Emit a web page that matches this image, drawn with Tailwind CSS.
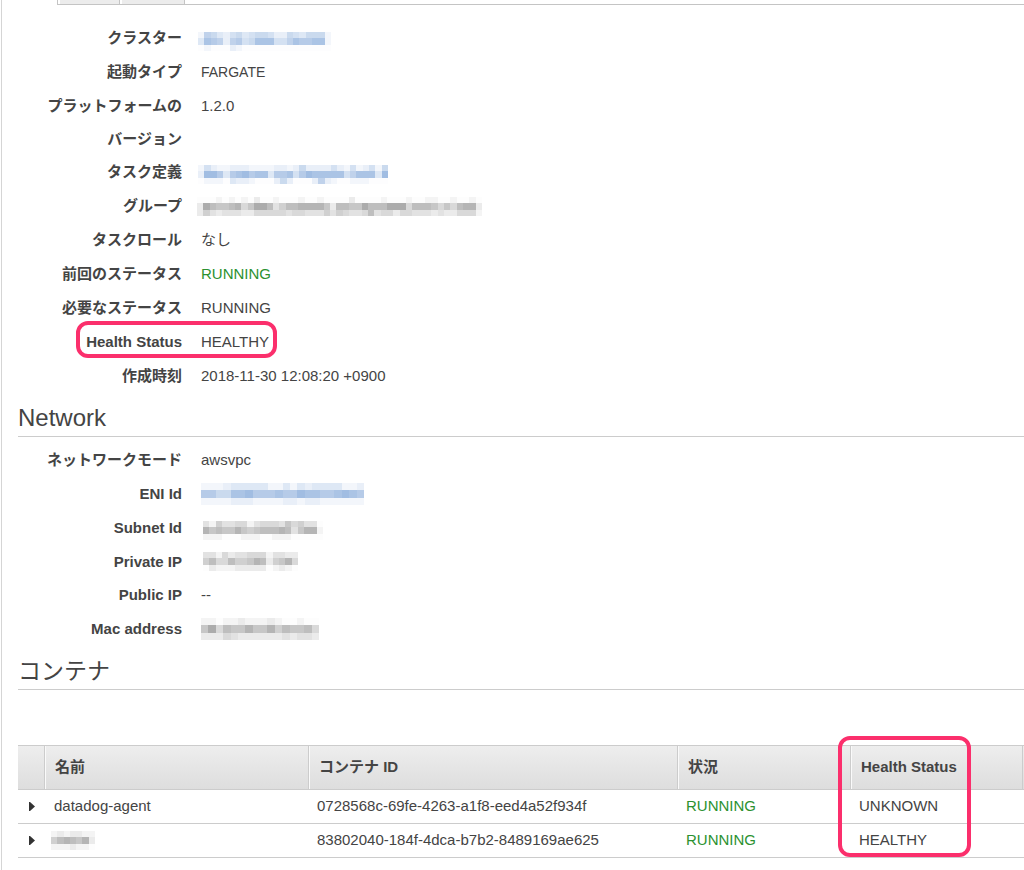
<!DOCTYPE html>
<html lang="ja">
<head>
<meta charset="utf-8">
<title>タスク</title>
<script src="https://cdn.jsdelivr.net/npm/@tailwindcss/browser@4"></script>
</head>
<body class="min-h-screen bg-white font-['Liberation_Sans','Noto_Sans_CJK_JP',sans-serif] text-[15px] text-[#444] overflow-x-hidden">
<div class="ml-px min-h-screen border-l border-[#d5d5d5]">
  <nav class="ml-[55px] flex h-[5px] gap-[2px] border-b border-l border-[#c4c4c4] pl-[2px]">
    <span class="w-[60px] border-r border-[#c4c4c4] bg-[#ececec]"></span>
    <span class="w-[63px] border-r border-[#c4c4c4] bg-[#ececec]"></span>
  </nav>

  <main class="pl-4 pt-4">
    <dl class="leading-[34px]">
      <div class="grid grid-cols-[164px_1fr] gap-x-[19px]"><dt class="text-right font-bold">クラスター</dt><dd class="flex h-[34px] items-center"><a href="#" aria-label="クラスター" class="-ml-[3px] mt-1.5 text-[#8fb0dc]"><svg class="block h-[19px] w-[133px]" data-mosaic="165324534554225435551/387626745888446877881/010002100000000000000"></svg></a></dd></div>
      <div class="grid grid-cols-[164px_1fr] gap-x-[19px]"><dt class="text-right font-bold">起動タイプ</dt><dd class="text-sm leading-[34px]">FARGATE</dd></div>
      <div class="grid grid-cols-[164px_1fr] gap-x-[19px] leading-[33px]"><dt class="text-right font-bold">プラットフォームの<br>バージョン</dt><dd>1.2.0</dd></div>
      <div class="grid grid-cols-[164px_1fr] gap-x-[19px]"><dt class="text-right font-bold">タスク定義</dt><dd class="flex h-[34px] items-center"><a href="#" aria-label="タスク定義" class="-ml-[3px] mt-1 text-[#8fb0dc]"><svg class="block h-[19px] w-[190px]" data-mosaic="142112221111221252222421412415/299737897883778479888884688839/011103221000252000262100111000"></svg></a></dd></div>
      <div class="grid grid-cols-[164px_1fr] gap-x-[19px]"><dt class="text-right font-bold">グループ</dt><dd class="flex h-[34px] items-center"><svg class="-ml-1 block h-[19px] w-[285px] text-[#9c9c9c]" data-mosaic="000101010200100010010000200001000100110010010/297667846997357788886277669777999477764647882/253233322444443443335354334734424433323224441"></svg></dd></div>
      <div class="grid grid-cols-[164px_1fr] gap-x-[19px]"><dt class="text-right font-bold">タスクロール</dt><dd>なし</dd></div>
      <div class="grid grid-cols-[164px_1fr] gap-x-[19px]"><dt class="text-right font-bold">前回のステータス</dt><dd class="text-[#2b9130]">RUNNING</dd></div>
      <div class="grid grid-cols-[164px_1fr] gap-x-[19px]"><dt class="text-right font-bold">必要なステータス</dt><dd>RUNNING</dd></div>
      <div class="relative grid grid-cols-[164px_1fr] gap-x-[19px]"><dt class="text-right font-bold">Health Status</dt><dd>HEALTHY</dd>
        <span class="pointer-events-none absolute -top-1 left-[58px] h-[37px] w-[201px] rounded-xl border-4 border-[#fb2f6c]"></span></div>
      <div class="grid grid-cols-[164px_1fr] gap-x-[19px]"><dt class="text-right font-bold">作成時刻</dt><dd>2018-11-30 12:08:20 +0900</dd></div>
    </dl>

    <h2 class="mt-2 border-b border-[#ccc] pb-px text-2xl leading-[34px]">Network</h2>
    <dl class="mt-1.5 leading-[34px]">
      <div class="grid grid-cols-[164px_1fr] gap-x-[19px]"><dt class="text-right font-bold">ネットワークモード</dt><dd>awsvpc</dd></div>
      <div class="grid grid-cols-[164px_1fr] gap-x-[19px]"><dt class="text-right font-bold">ENI Id</dt><dd class="flex h-[34px] items-center"><a href="#" aria-label="ENI Id" class="text-[#8fb0dc]"><svg class="block h-[22px] w-[163px]" data-mosaic="1112333331131323333112/7755889777877988778987/1111222111122122111111"></svg></a></dd></div>
      <div class="grid grid-cols-[164px_1fr] gap-x-[19px]"><dt class="text-right font-bold">Subnet Id</dt><dd class="flex h-[34px] items-center"><svg class="ml-0.5 mt-1 block h-[19px] w-[120px] text-[#9c9c9c]" data-mosaic="3153344134443645330/8676686567778736881/1110001110011100000"></svg></dd></div>
      <div class="grid grid-cols-[164px_1fr] gap-x-[19px] leading-[33px]"><dt class="text-right font-bold">Private IP</dt><dd class="flex h-[33px] items-center"><svg class="ml-0.5 block h-[19px] w-[95px] text-[#9c9c9c]" data-mosaic="331423344413322/574475568725684/021112222201210"></svg></dd></div>
      <div class="grid grid-cols-[164px_1fr] gap-x-[19px]"><dt class="text-right font-bold">Public IP</dt><dd>--</dd></div>
      <div class="grid grid-cols-[164px_1fr] gap-x-[19px]"><dt class="text-right font-bold">Mac address</dt><dd class="flex h-[34px] items-center"><svg class="block h-[22px] w-[118px] text-[#9c9c9c]" data-mosaic="1101121112100100/6947668668576674/2224322222232332"></svg></dd></div>
    </dl>

    <h2 class="mt-2 border-b border-[#ccc] pb-px text-[23px] leading-[34px]">コンテナ</h2>

    <table class="mt-[55px] w-full table-fixed border-separate border-spacing-0 text-left">
      <colgroup><col class="w-[27px]"><col class="w-[264px]"><col class="w-[369px]"><col class="w-[173px]"><col><col class="w-px"></colgroup>
      <thead>
        <tr class="h-[45px] bg-linear-to-b from-[#eeeeee] to-[#dddddd]">
          <th class="border-y border-r border-[#ccc]"></th>
          <th class="border-y border-r border-[#ccc] pl-[10px] shadow-[inset_1px_0_0_#fafafa]">名前</th>
          <th class="border-y border-r border-[#ccc] pl-[10px] shadow-[inset_1px_0_0_#fafafa]">コンテナ ID</th>
          <th class="border-y border-r border-[#ccc] pl-[10px] shadow-[inset_1px_0_0_#fafafa]">状況</th>
          <th class="relative border-y border-r border-[#ccc] pl-[10px] shadow-[inset_1px_0_0_#fafafa]">Health Status
            <span class="pointer-events-none absolute -left-[13px] -top-[10px] h-[121px] w-[133px] rounded-xl border-4 border-[#fb2f6c]"></span></th>
          <th class="border-y border-[#ccc]"></th>
        </tr>
      </thead>
      <tbody>
        <tr class="h-[34px]">
          <td class="border-b border-[#ccc]"><button type="button" aria-label="datadog-agent" class="ml-[11px] block"><svg class="block h-[9px] w-[6px]" viewBox="0 0 6 9"><path d="M0 0H1L6 4.500L1 9H0Z" fill="#333"/></svg></button></td>
          <td class="border-b border-[#ccc] pl-[9px]">datadog-agent</td>
          <td class="border-b border-[#ccc] pl-[8px]">0728568c-69fe-4263-a1f8-eed4a52f934f</td>
          <td class="border-b border-[#ccc] pl-[8px] text-[#2b9130]">RUNNING</td>
          <td class="border-b border-[#ccc] pl-[8px]">UNKNOWN</td>
          <td class="border-b border-[#ccc]"></td>
        </tr>
        <tr class="h-[34px]">
          <td class="border-b border-[#ccc]"><button type="button" aria-label="コンテナ" class="ml-[11px] block"><svg class="block h-[9px] w-[6px]" viewBox="0 0 6 9"><path d="M0 0H1L6 4.500L1 9H0Z" fill="#333"/></svg></button></td>
          <td class="border-b border-[#ccc] pl-[6px]"><svg class="block h-[19px] w-[44px] text-[#9c9c9c]" data-mosaic="1212211/5787682/1112110"></svg></td>
          <td class="border-b border-[#ccc] pl-[8px]">83802040-184f-4dca-b7b2-8489169ae625</td>
          <td class="border-b border-[#ccc] pl-[8px] text-[#2b9130]">RUNNING</td>
          <td class="border-b border-[#ccc] pl-[8px]">HEALTHY</td>
          <td class="border-b border-[#ccc]"></td>
        </tr>
      </tbody>
    </table>
  </main>
</div>
<script>
// Draws masked values: each digit is the strength of one cell, rows are split by "/".
document.querySelectorAll('svg[data-mosaic]').forEach(function (svg) {
  var rows = svg.dataset.mosaic.split('/');
  svg.setAttribute('viewBox', '0 0 ' + rows[0].length + ' ' + rows.length);
  svg.setAttribute('preserveAspectRatio', 'none');
  svg.setAttribute('shape-rendering', 'crispEdges');
  svg.setAttribute('aria-hidden', 'true');
  rows.forEach(function (row, y) {
    row.split('').forEach(function (level, x) {
      var cell = document.createElementNS('http://www.w3.org/2000/svg', 'rect');
      cell.setAttribute('x', x);
      cell.setAttribute('y', y);
      cell.setAttribute('width', 1);
      cell.setAttribute('height', 1);
      cell.setAttribute('fill', 'currentColor');
      cell.setAttribute('fill-opacity', level / 11 + 0.02);
      svg.appendChild(cell);
    });
  });
});
</script>
</body>
</html>
